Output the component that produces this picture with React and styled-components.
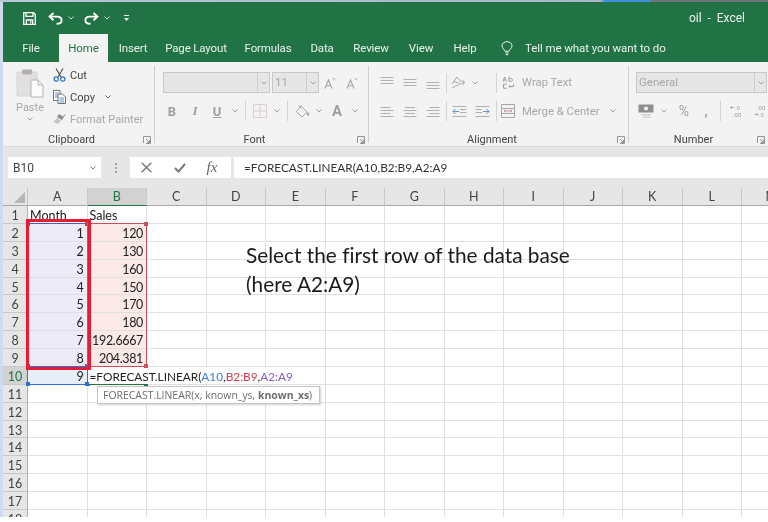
import React from "react";
import styled, { createGlobalStyle } from "styled-components";

const Global = createGlobalStyle`
  html, body { margin: 0; padding: 0; background: #fff; }
  body { width: 768px; height: 522px; overflow: hidden; font-family: Roboto, "Liberation Sans", sans-serif; }
  #root { width: 768px; height: 522px; }
  svg { flex: none; display: block; }
`;

const Page = styled.div`
  width: 768px; height: 522px; background: #fff; overflow: hidden;
  filter: blur(0.35px);
`;
const TopStrip = styled.div`
  height: 2px;
  background: linear-gradient(90deg, #b9c6da 0, #a9b6c8 600px, #3f8fdc 605px, #3f8fdc 650px, #6f7480 651px, #6f7480 100%);
`;
const Window = styled.div`
  height: 515px; border-left: 3px solid #cfdaee; overflow: hidden; background: #fff;
`;
const TitleBar = styled.div`
  height: 32px; background: #217346; display: flex; align-items: center; color: #fff;
`;
const Qat = styled.div`
  display: flex; align-items: center; padding-left: 20px; flex: 1;
`;
const QatSlot = styled.div`
  width: ${p => p.$w}px; flex: none; display: flex; justify-content: center; align-items: center;
`;
const DocTitle = styled.div`
  font-size: 12px; color: #eef4f0; padding-right: 23px; white-space: pre;
`;
const TabBar = styled.div`
  height: 28px; background: #217346; display: flex; align-items: stretch;
`;
const Tab = styled.div`
  width: ${p => p.$w}px; display: flex; align-items: center; justify-content: center;
  font-size: 11.5px; letter-spacing: -0.15px; white-space: nowrap;
  color: ${p => (p.$active ? "#217346" : "#eaf2ed")};
  background: ${p => (p.$active ? "#f3f3f3" : "transparent")};
`;
const TellMe = styled.div`
  display: flex; align-items: center; gap: 12px; padding-left: 13px; font-size: 11.5px; letter-spacing: -0.08px; color: #eaf2ed; white-space: nowrap;
`;
const Ribbon = styled.div`
  height: 85px; box-sizing: border-box; padding-top: 4px; background: #f3f3f3; display: flex;
  border-bottom: 1px solid #dcdcdc;
`;
const Group = styled.div`
  position: relative; width: ${p => p.$w}px; height: 77px; box-sizing: border-box; flex: none;
  border-right: ${p => (p.$last ? "none" : "1px solid #cfcfcf")};
  display: flex; flex-direction: column;
`;
const GroupBody = styled.div`
  flex: 1; display: flex; flex-direction: ${p => (p.$row ? "row" : "column")};
  padding-top: ${p => (p.$row ? 2 : 6)}px; padding-left: ${p => p.$pl || 0}px; gap: ${p => (p.$row ? 0 : 7)}px;
`;
const GroupLabel = styled.div`
  height: 14px; margin-bottom: -4px; text-align: center; font-size: 11px; line-height: 14px; color: #444;
  padding-right: ${p => p.$pr || 0}px;
`;
const Launcher = styled.svg`
  position: absolute; right: 3px; bottom: -1px; width: 8px; height: 8px;
`;
const PasteCol = styled.div`
  width: 50px; display: flex; flex-direction: column; align-items: center; padding-left: 4px; box-sizing: border-box;
  font-size: 11px; color: #a8a8a8; padding-top: 1px; flex: none;
`;
const PasteLabel = styled.div`
  line-height: 13px; margin-top: 2px; margin-bottom: 3px;
`;
const ClipCol = styled.div`
  display: flex; flex-direction: column; gap: 8px;
`;
const ClipRow = styled.div`
  height: 14px; display: flex; align-items: center; gap: 4px; font-size: 11.1px;
  color: ${p => (p.$off ? "#a8a8a8" : "#444")}; white-space: nowrap;
`;
const ToolRow = styled.div`
  display: flex; align-items: center; height: ${p => p.$h || 22}px;
`;
const Combo = styled.div`
  width: ${p => p.$w}px; height: 21px; box-sizing: border-box; display: flex; flex: none;
  background: #e6e6e6; border: 1px solid #c9c9c9; margin-right: ${p => p.$mr || 0}px;
  font-size: 11.5px; color: #a8a8a8; line-height: 19px;
`;
const ComboText = styled.div`
  flex: 1; padding-left: 2px;
`;
const ComboArrow = styled.div`
  width: 11px; border-left: 1px solid #cdcdcd; display: flex; align-items: center; justify-content: center;
`;
const Tool = styled.div`
  width: ${p => p.$w}px; flex: none; display: flex; align-items: center; justify-content: center;
  font-size: ${p => p.$fs || 12}px; font-weight: ${p => (p.$b ? 700 : 400)}; font-style: ${p => (p.$i ? "italic" : "normal")};
  text-decoration: ${p => (p.$u ? "underline" : "none")};
  color: #9f9f9f; font-family: ${p => (p.$serif ? '"Liberation Serif", serif' : "inherit")};
`;
const Sep = styled.div`
  width: 1px; height: 20px; background: #d4d4d4; flex: none;
`;
const ToolText = styled.div`
  font-size: 11.3px; color: #a8a8a8; white-space: nowrap; flex: none; width: ${p => p.$w}px; padding-left: ${p => p.$pl || 0}px; box-sizing: border-box;
`;
const FormulaBand = styled.div`
  height: 41px; box-sizing: border-box; background: #e6e6e6; display: flex; align-items: flex-start; padding-top: 10px; padding-left: 5px;
`;
const NameBox = styled.div`
  width: 93px; height: 21px; box-sizing: border-box; background: #fff; display: flex; align-items: center; justify-content: space-between;
  padding: 0 5px 0 5px; font-size: 12px; color: #444; flex: none;
`;
const Grip = styled.div`
  width: 29px; flex: none; display: flex; flex-direction: column; align-items: center; justify-content: center; height: 21px; gap: 2px;
`;
const GripDot = styled.i`
  width: 2px; height: 2px; background: #a8a8a8; display: block;
`;
const FxBox = styled.div`
  width: 101px; height: 21px; background: #fff; display: flex; align-items: center; flex: none; margin-right: 3px;
`;
const FxSlot = styled.div`
  width: ${p => p.$w}px; display: flex; justify-content: center; align-items: center; flex: none;
  font-family: "Liberation Serif", serif; font-style: italic; font-size: 15px; color: #666;
`;
const FormulaInput = styled.div`
  flex: 1; height: 21px; background: #fff; padding-left: 10px; font-family: Lato, "Liberation Sans", sans-serif; font-size: 11.8px; line-height: 22px; color: #333; white-space: nowrap;
`;
const Sheet = styled.div`
  position: relative; height: 329px; overflow: hidden;
  display: grid; grid-template-columns: 25px repeat(13, 59.5px); grid-auto-rows: 17.875px; grid-template-rows: 18px;
  font-family: Lato, "Liberation Sans", sans-serif;
`;
const Corner = styled.div`
  background: #e6e6e6; border-bottom: 1px solid #a8a8a8; border-right: 1px solid #c4c4c4; position: relative; box-sizing: border-box;
`;
const CornerTri = styled.div`
  position: absolute; right: 2px; bottom: 2px; width: 0; height: 0;
  border-left: 11px solid transparent; border-bottom: 11px solid #b5b5b5;
`;
const ColHead = styled.div`
  box-sizing: border-box; display: flex; align-items: center; justify-content: center; font-size: 12.5px;
  background: ${p => (p.$sel ? "#d2d2d2" : "#e6e6e6")};
  color: ${p => (p.$sel ? "#217346" : "#444")};
  border-bottom: ${p => (p.$sel ? "1px solid #217346" : "1px solid #a8a8a8")};
  border-right: 1px solid #c8c8c8;
`;
const RowHead = styled.div`
  box-sizing: border-box; text-align: center; font-size: 12.5px; line-height: 20px;
  background: ${p => (p.$sel ? "#d2d2d2" : "#e6e6e6")};
  color: ${p => (p.$sel ? "#217346" : "#444")};
  border-bottom: 1px solid #c8c8c8;
  border-right: ${p => (p.$sel ? "1px solid #217346" : "1px solid #b0b0b0")};
`;
const Cell = styled.div`
  box-sizing: border-box; padding: 0 3px 0 2px; font-size: 12.5px; line-height: 20px; color: #222; white-space: nowrap; position: relative;
  text-align: ${p => (p.$right ? "right" : "left")};
  letter-spacing: ${p => (p.$right ? "-0.35px" : "0")};
  background: ${p => p.$fill || "#fff"};
  border-right: 1px solid #e0e0e0; border-bottom: 1px solid #e0e0e0;
`;
const EditText = styled.div`
  position: absolute; left: 0; top: 0; height: 17px; width: 207px; background: #fff; padding-left: 2px; z-index: 2; box-sizing: border-box;
  font-size: 11.8px; line-height: 20px; color: #222; letter-spacing: 0; text-align: left;
`;
const Ref = styled.span`
  color: ${p => p.$c};
`;
const RangeBox = styled.div`
  position: absolute; box-sizing: border-box; border: 1px solid ${p => p.$c}; z-index: ${p => p.$z || 3}; pointer-events: none;
`;
const Handle = styled.i`
  position: absolute; width: 4px; height: 4px; background: ${p => p.$c};
  ${p => (p.$l ? "left: -2px;" : "right: -2px;")}
  ${p => (p.$t ? "top: -2px;" : "bottom: -2px;")}
`;
const RedFrame = styled.div`
  position: absolute; left: 23px; top: 31px; width: 65px; height: 151px; box-sizing: border-box;
  border: 3.7px solid #e81c30; z-index: 4;
`;
const Note = styled.div`
  position: absolute; left: 243px; top: 52px; z-index: 3; font-size: 20.8px; line-height: 29px; color: #1b1b1b; white-space: nowrap;
  font-variant-ligatures: none;
`;
const Hint = styled.div`
  position: absolute; left: 94px; top: 198px; width: 223px; height: 18px; box-sizing: border-box; z-index: 5;
  background: #fff; border: 1px solid #c4c4c4; box-shadow: 1px 1px 2px rgba(0,0,0,.18);
  font-family: "Open Sans", sans-serif; font-size: 10.45px; line-height: 16px; color: #6e6e6e; padding-left: 5px; white-space: nowrap;
`;

const Chev = ({ c = "#a0a0a0" }) => (
  <svg width="6" height="4" viewBox="0 0 6 4"><path d="M.5.5 3 3 5.5.5" fill="none" stroke={c} strokeWidth="1" /></svg>
);
const LauncherIcon = () => (
  <Launcher viewBox="0 0 8 8"><path d="M.5 7V.5H7.5V7.5H3M3 3l3.5 3.5M6.5 4v2.5H4" fill="none" stroke="#8c8c8c" strokeWidth=".9" /></Launcher>
);
const Save = () => (
  <svg width="13" height="13" viewBox="0 0 13 13" fill="none" stroke="#fff" strokeWidth="1.3">
    <path d="M.7.7h9.8l1.8 1.8v9.8H.7z" /><path d="M3 .9v3.4h7V.9" /><path d="M3.4 12.2V8h6.2v4.2" /><path d="M7.6 9.2v2" />
  </svg>
);
const Undo = ({ flip }) => (
  <svg width="15" height="13" viewBox="0 0 15 13" fill="none" stroke="#fff" strokeWidth="1.9" style={flip ? { transform: "scaleX(-1)" } : undefined}>
    <path d="M5.5 1 1.6 4.6l3.9 3.6" /><path d="M2 4.6h7c3 0 4.6 1.6 4.6 3.6S12 11.8 8.5 11.8" />
  </svg>
);
const QatMore = () => (
  <svg width="7" height="7" viewBox="0 0 7 7" fill="#e6f0ea"><rect x="1" y="0" width="5" height="1" /><path d="M1 3h5L3.5 6z" /></svg>
);
const Bulb = () => (
  <svg width="12" height="15" viewBox="0 0 14 18" fill="none" stroke="#eaf2ed" strokeWidth="1.2">
    <path d="M4.6 12.4c0-2-3.6-3.4-3.6-6.6a6 5 0 0 1 12 0c0 3.2-3.6 4.6-3.6 6.6z" /><path d="M5 14.4h4M5.6 16.4h2.8" />
  </svg>
);
const PasteIcon = () => (
  <svg width="28" height="30" viewBox="0 0 28 30">
    <rect x="1" y="3" width="20" height="24" rx="1" fill="#e2dfdf" stroke="#d6d2d2" />
    <rect x="6" y="0.5" width="10" height="5" rx="1" fill="#b4b0b0" />
    <path d="M15 11h7l5 5v12H15z" fill="#fbfbfb" stroke="#b4b4b4" />
    <path d="M22 11v5h5" fill="none" stroke="#b4b4b4" />
  </svg>
);
const ScissorsIcon = () => (
  <svg width="13" height="14" viewBox="0 0 13 14" fill="none">
    <path d="M3 .5l5 8.5M10 .5 5 9" stroke="#555" strokeWidth="1.2" /><circle cx="3.2" cy="11" r="2.1" stroke="#2f73c0" strokeWidth="1.2" /><circle cx="9.8" cy="11" r="2.1" stroke="#2f73c0" strokeWidth="1.2" />
  </svg>
);
const CopyIcon = () => (
  <svg width="13" height="14" viewBox="0 0 13 14" fill="none" stroke="#666" strokeWidth=".9">
    <path d="M.5.5h6.5v10H.5z" fill="#fff" /><path d="M2 3h3.5M2 5h3.5M2 7h3.5" stroke="#4a86c8" />
    <path d="M5 4h4.5l3 3v6.5H5z" fill="#fff" /><path d="M6.5 8h4.5M6.5 10h4.5M6.5 12h4.5" stroke="#4a86c8" />
  </svg>
);
const BrushIcon = () => (
  <svg width="13" height="12" viewBox="0 0 13 12"><path d="M6 1l5 3-2 3-5-3z" fill="#8f8f8f" /><path d="M10 2.5l2-1.5.6 1-1.6 2z" fill="#b0b0b0" /><path d="M4 5l4 2.5L5 11 .5 9z" fill="#c4c4c4" /></svg>
);
const GrowA = ({ small }) => (
  <svg width="12" height="12" viewBox="0 0 12 12" fill="none" stroke="#a6a6a6">
    <path d="M1 11.5 4.5 3 8 11.5M2.2 8.8h4.6" strokeWidth="1.1" />
    <path d={small ? "M8.5 1.2l1.5 1.4 1.5-1.4" : "M8.5 2.6l1.5-1.4 1.5 1.4"} strokeWidth=".9" />
  </svg>
);
const BordersIcon = () => (
  <svg width="14" height="14" viewBox="0 0 14 14" fill="none" stroke="#d9cdd6"><path d="M.5.5h13v13H.5zM7 .5v13M.5 7h13" /></svg>
);
const FillIcon = () => (
  <svg width="15" height="14" viewBox="0 0 15 14" fill="none" stroke="#a6a6a6" strokeWidth="1"><path d="M6 2 12 8 7 13 1.5 7.6z" /><path d="M4 1.5l2 3" /><path d="M13 8.5c1 1.5 1 2.7 0 3-1-.3-1-1.5 0-3z" fill="#a6a6a6" /></svg>
);
const Lines = ({ pos = "c", top }) => {
  const w = [10, 13, 10, 13];
  const rows = top === undefined ? [2, 5, 8, 11] : top;
  return (
    <svg width="14" height="13" viewBox="0 0 14 13" stroke="#b2b2b2" strokeWidth="1">
      {rows.map((y, i) => {
        const len = rows.length === 3 ? 13 : w[i];
        const x = pos === "l" ? 0.5 : pos === "r" ? 13.5 - len : 7 - len / 2;
        return <path key={y} d={`M${x} ${y + .5}h${len}`} />;
      })}
    </svg>
  );
};
const Orient = () => (
  <svg width="16" height="13" viewBox="0 0 16 13" fill="none" stroke="#a8a8a8"><path d="M2 8 7 1l4 5M3.5 5.6 9 7M2 12l12-6M11.5 4 14.5 6l-1.6 3" /></svg>
);
const Indent = ({ rev }) => (
  <svg width="15" height="13" viewBox="0 0 15 13" fill="none" stroke="#b0b0b0" style={rev ? { transform: "scaleX(-1)" } : undefined}>
    <path d="M.5 1.5h14M8 4.5h6.5M8 7.5h6.5M.5 11.5h14" /><path d="M7 6.5H1M3.5 4 1 6.5 3.5 9" stroke="#6d8fb8" />
  </svg>
);
const WrapIcon = () => (
  <svg width="13" height="14" viewBox="0 0 13 14" fill="none" stroke="#a0a0a0"><path d="M1 5.6 2.6 1 4.4 5.6M1.6 4h2.2M7 .5v5M7 3c2-1 3.6-.5 3.4 1.2S8.6 6 7 4.8" /><path d="M5 8.2H1.5v4H5M7 10.5h4.5V8M7 10.5l1.4-1.4M7 10.5l1.4 1.4" /></svg>
);
const MergeIcon = () => (
  <svg width="14" height="14" viewBox="0 0 14 14" fill="none" stroke="#a8a8a8"><path d="M.5.5h13v13H.5zM.5 4.5h13M.5 9.5h13" /><path d="M3 7h8M3 7l1.5-1.2M3 7l1.5 1.2M11 7 9.5 5.8M11 7 9.5 8.2" stroke="#c79a9a" /></svg>
);
const Accounting = () => (
  <svg width="16" height="15" viewBox="0 0 16 15"><rect x=".5" y=".5" width="15" height="8" fill="#8f8f8f" /><circle cx="8" cy="4.5" r="2" fill="#f3f3f3" /><rect x="3" y="10" width="10" height="1.5" fill="#d0d0d0" /><rect x="5" y="12.5" width="8" height="1.5" fill="#d8d8d8" /></svg>
);
const Decimal = ({ more }) => (
  <svg width="12" height="14" viewBox="0 0 12 14" fill="none">
    <text x={more ? 3 : 5} y="5.5" fontSize="6" fill="#a0a0a0" fontFamily="Roboto">{more ? ".00" : ".0"}</text>
    <text x={more ? 5 : 3} y="12.5" fontSize="6" fill="#a0a0a0" fontFamily="Roboto">{more ? ".0" : ".00"}</text>
    <path d={more ? "M0 10.5h4M2.5 9l1.5 1.5L2.5 12" : "M.5 3.5h4M2 2 .5 3.5 2 5"} stroke="#8aa4c4" strokeWidth=".8" />
  </svg>
);
const CancelIcon = () => (
  <svg width="11" height="11" viewBox="0 0 11 11" stroke="#777" strokeWidth="1.4"><path d="M.7.7l9.6 9.6M10.3.7.7 10.3" /></svg>
);
const CheckIcon = () => (
  <svg width="12" height="10" viewBox="0 0 12 10" fill="none" stroke="#777" strokeWidth="2"><path d="M1 5l3.5 3.6L11 1" /></svg>
);

const ROW_H = 17.875, COL_W = 59.5, HEAD_W = 25, HEAD_H = 18;
const rangeStyle = (col, r1, r2) => ({
  left: HEAD_W + COL_W * col - 1,
  top: HEAD_H + ROW_H * (r1 - 1) - 1,
  width: COL_W + 1,
  height: ROW_H * (r2 - r1 + 1) + 1,
});
const COLS = "ABCDEFGHIJKLM".split("");
const A = { 1: "Month", 2: "1", 3: "2", 4: "3", 5: "4", 6: "5", 7: "6", 8: "7", 9: "8", 10: "9" };
const B = { 1: "Sales", 2: "120", 3: "130", 4: "160", 5: "150", 6: "170", 7: "180", 8: "192.6667", 9: "204.381" };
const ROWS = Array.from({ length: 19 }, (_, i) => i + 1);

const fillFor = (c, r) => {
  if (c === 0 && r >= 2 && r <= 9) return "#ecebf7";
  if (c === 1 && r >= 2 && r <= 9) return "#fbe9e7";
  if (c === 0 && r === 10) return "#e8eef8";
  return undefined;
};

const Range = ({ col, r1, r2, c, z }) => (
  <RangeBox $c={c} $z={z} style={rangeStyle(col, r1, r2)}>
    <Handle $c={c} $l $t /><Handle $c={c} $t /><Handle $c={c} $l /><Handle $c={c} />
  </RangeBox>
);

const tabs = [["File", 56], ["Home", 49, true], ["Insert", 50], ["Page Layout", 76], ["Formulas", 68], ["Data", 40], ["Review", 58], ["View", 42], ["Help", 46]];

export default function App() {
  return (
    <Page>
      <Global />
      <TopStrip />
      <Window>
        <TitleBar>
          <Qat>
            <QatSlot $w={13}><Save /></QatSlot>
            <QatSlot $w={5} />
            <QatSlot $w={28}><Undo /></QatSlot>
            <QatSlot $w={4}><Chev c="#cfe0d6" /></QatSlot>
            <QatSlot $w={4} />
            <QatSlot $w={28}><Undo flip /></QatSlot>
            <QatSlot $w={4}><Chev c="#cfe0d6" /></QatSlot>
            <QatSlot $w={34}><QatMore /></QatSlot>
          </Qat>
          <DocTitle>oil  -  Excel</DocTitle>
        </TitleBar>
        <TabBar>
          {tabs.map(([t, w, a]) => <Tab key={t} $w={w} $active={a}>{t}</Tab>)}
          <TellMe><Bulb />Tell me what you want to do</TellMe>
        </TabBar>
        <Ribbon>
          <Group $w={152}>
            <GroupBody $row>
              <PasteCol>
                <PasteIcon />
                <PasteLabel>Paste</PasteLabel>
                <Chev />
              </PasteCol>
              <ClipCol>
                <ClipRow><ScissorsIcon />Cut</ClipRow>
                <ClipRow><CopyIcon />Copy<Tool $w={18}><Chev c="#666" /></Tool></ClipRow>
                <ClipRow $off><BrushIcon />Format Painter</ClipRow>
              </ClipCol>
            </GroupBody>
            <GroupLabel $pr={14}>Clipboard</GroupLabel>
            <LauncherIcon />
          </Group>
          <Group $w={214}>
            <GroupBody $pl={8}>
              <ToolRow $h={21}>
                <Combo $w={107} $mr={2}><ComboText /><ComboArrow><Chev /></ComboArrow></Combo>
                <Combo $w={47}><ComboText>11</ComboText><ComboArrow><Chev /></ComboArrow></Combo>
                <Tool $w={22}><GrowA /></Tool>
                <Tool $w={22}><GrowA small /></Tool>
              </ToolRow>
              <ToolRow>
                <Tool $w={18} $b $fs={13}>B</Tool>
                <Tool $w={28} $i $b $fs={13} $serif>I</Tool>
                <Tool $w={16} $u $b $fs={13}>U</Tool>
                <Tool $w={20}><Chev /></Tool>
                <Sep />
                <Tool $w={28}><BordersIcon /></Tool>
                <Tool $w={6}><Chev /></Tool>
                <Tool $w={7} />
                <Sep />
                <Tool $w={28}><FillIcon /></Tool>
                <Tool $w={6}><Chev /></Tool>
                <Tool $w={30} $fs={15} $b>A</Tool>
                <Tool $w={6}><Chev /></Tool>
              </ToolRow>
            </GroupBody>
            <GroupLabel $pr={14}>Font</GroupLabel>
            <LauncherIcon />
          </Group>
          <Group $w={260}>
            <GroupBody $pl={11}>
              <ToolRow $h={21}>
                <Tool $w={14}><Lines top={[1, 4, 7]} /></Tool>
                <Tool $w={32}><Lines top={[3, 6, 9]} /></Tool>
                <Tool $w={14}><Lines top={[6, 9, 12]} /></Tool>
                <Tool $w={6} />
                <Sep />
                <Tool $w={22}><Orient /></Tool>
                <Tool $w={12}><Chev /></Tool>
                <Tool $w={15} />
                <Sep />
                <Tool $w={22}><WrapIcon /></Tool>
                <ToolText $w={80} $pl={3}>Wrap Text</ToolText>
              </ToolRow>
              <ToolRow>
                <Tool $w={14}><Lines pos="l" /></Tool>
                <Tool $w={32}><Lines pos="c" /></Tool>
                <Tool $w={14}><Lines pos="r" /></Tool>
                <Tool $w={6} />
                <Sep />
                <Tool $w={24}><Indent /></Tool>
                <Tool $w={22}><Indent rev /></Tool>
                <Tool $w={3} />
                <Sep />
                <Tool $w={22}><MergeIcon /></Tool>
                <ToolText $w={90} $pl={3}>Merge &amp; Center</ToolText>
                <Tool $w={8}><Chev /></Tool>
              </ToolRow>
            </GroupBody>
            <GroupLabel $pr={13}>Alignment</GroupLabel>
            <LauncherIcon />
          </Group>
          <Group $w={139} $last>
            <GroupBody $pl={7}>
              <ToolRow $h={21}>
                <Combo $w={131}><ComboText>General</ComboText><ComboArrow><Chev /></ComboArrow></Combo>
              </ToolRow>
              <ToolRow>
                <Tool $w={20}><Accounting /></Tool>
                <Tool $w={16}><Chev /></Tool>
                <Tool $w={24} $fs={14}>%</Tool>
                <Tool $w={20} $fs={13} $b>,</Tool>
                <Tool $w={4} />
                <Sep />
                <Tool $w={30}><Decimal /></Tool>
                <Tool $w={18}><Decimal more /></Tool>
              </ToolRow>
            </GroupBody>
            <GroupLabel $pr={10}>Number</GroupLabel>
            <LauncherIcon />
          </Group>
        </Ribbon>
        <FormulaBand>
          <NameBox>B10<Chev c="#777" /></NameBox>
          <Grip><GripDot /><GripDot /><GripDot /></Grip>
          <FxBox>
            <FxSlot $w={33}><CancelIcon /></FxSlot>
            <FxSlot $w={34}><CheckIcon /></FxSlot>
            <FxSlot $w={30}>fx</FxSlot>
          </FxBox>
          <FormulaInput>=FORECAST.LINEAR(A10,B2:B9,A2:A9</FormulaInput>
        </FormulaBand>
        <Sheet>
          <Corner><CornerTri /></Corner>
          {COLS.map(c => <ColHead key={c} $sel={c === "B"}>{c}</ColHead>)}
          {ROWS.map(r => (
            <React.Fragment key={r}>
              <RowHead $sel={r === 10}>{r}</RowHead>
              {COLS.map((c, i) => (
                <Cell key={c} $fill={fillFor(i, r)} $right={r > 1 && i < 2}>
                  {i === 0 ? A[r] : i === 1 && r !== 10 ? B[r] : null}
                  {i === 1 && r === 10 && (
                    <EditText>
                      =FORECAST.LINEAR(<Ref $c="#3f7fd0">A10</Ref>,<Ref $c="#d0404a">B2:B9</Ref>,<Ref $c="#8a5cc4">A2:A9</Ref>
                    </EditText>
                  )}
                </Cell>
              ))}
            </React.Fragment>
          ))}
          <Range col={0} r1={2} r2={9} c="#5a55b8" />
          <Range col={1} r1={2} r2={9} c="#c8505a" />
          <Range col={0} r1={10} r2={10} c="#2f6fd0" />
          <Range col={1} r1={10} r2={10} c="#217346" z={1} />
          <RedFrame />
          <Note>Select the first row of the data base<br />(here A2:A9)</Note>
          <Hint>FORECAST.LINEAR(x, known_ys, <b>known_xs</b>)</Hint>
        </Sheet>
      </Window>
    </Page>
  );
}
